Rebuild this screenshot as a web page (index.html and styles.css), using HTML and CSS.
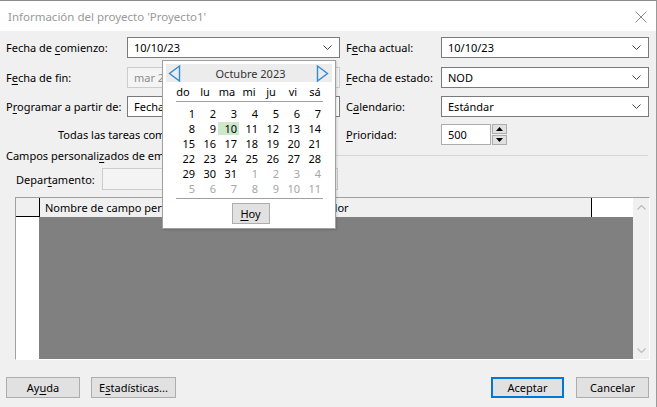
FILE: index.html
```html
<!DOCTYPE html>
<html lang="es">
<head>
    <meta charset="UTF-8">
    <title>Información del proyecto</title>
    <link rel="stylesheet" href="styles.css">
</head>
<body>
<div class="dialog">
    <div class="titlebar">
        <span class="title">Información del proyecto 'Proyecto1'</span>
        <svg class="close" width="12" height="12" viewBox="0 0 12 12">
            <path d="M0.5 0.5 L11.5 11.5 M11.5 0.5 L0.5 11.5" stroke="#8a8a8a" stroke-width="1" fill="none"/>
        </svg>
    </div>
    <div class="content">
        <div class="form">
            <div class="col left">
                <div class="row r1">
                    <label class="lbl">Fecha de <u>c</u>omienzo:</label>
                    <div class="combo">
                        <span>10/10/23</span>
                        <svg class="chev" width="9" height="5" viewBox="0 0 9 5"><path d="M0.5 0.5 L4.5 4.5 L8.5 0.5" stroke="#444" fill="none"/></svg>
                    </div>
                </div>
                <div class="row r2">
                    <label class="lbl">F<u>e</u>cha de fin:</label>
                    <div class="field disabled"><span>mar 27/10/23</span></div>
                </div>
                <div class="row r3">
                    <label class="lbl">P<u>r</u>ogramar a partir de:</label>
                    <div class="combo"><span>Fecha de comienzo del proyecto</span></div>
                </div>
                <div class="row r4">
                    <span class="note">Todas las tareas comienzan lo antes posible.</span>
                </div>
            </div>
            <div class="col right">
                <div class="row r1">
                    <label class="lbl">F<u>e</u>cha actual:</label>
                    <div class="combo">
                        <span>10/10/23</span>
                        <svg class="chev" width="9" height="5" viewBox="0 0 9 5"><path d="M0.5 0.5 L4.5 4.5 L8.5 0.5" stroke="#444" fill="none"/></svg>
                    </div>
                </div>
                <div class="row r2">
                    <label class="lbl"><u>F</u>echa de estado:</label>
                    <div class="combo">
                        <span>NOD</span>
                        <svg class="chev" width="9" height="5" viewBox="0 0 9 5"><path d="M0.5 0.5 L4.5 4.5 L8.5 0.5" stroke="#444" fill="none"/></svg>
                    </div>
                </div>
                <div class="row r3">
                    <label class="lbl">C<u>a</u>lendario:</label>
                    <div class="combo">
                        <span>Estándar</span>
                        <svg class="chev" width="9" height="5" viewBox="0 0 9 5"><path d="M0.5 0.5 L4.5 4.5 L8.5 0.5" stroke="#444" fill="none"/></svg>
                    </div>
                </div>
                <div class="row r4">
                    <label class="lbl"><u>P</u>rioridad:</label>
                    <div class="field spinbox"><span>500</span></div>
                    <div class="spin">
                        <div class="spin-btn">
                            <svg width="7" height="4" viewBox="0 0 7 4"><path d="M0 4 L3.5 0 L7 4 Z" fill="#000"/></svg>
                        </div>
                        <div class="spin-btn">
                            <svg width="7" height="4" viewBox="0 0 7 4"><path d="M0 0 L3.5 4 L7 0 Z" fill="#000"/></svg>
                        </div>
                    </div>
                </div>
            </div>
        </div>

        <div class="group">
            <span>Campos personali<u>z</u>ados de empresa</span>
            <div class="group-line"></div>
        </div>

        <div class="dept">
            <label class="lbl">Depar<u>t</u>amento:</label>
            <div class="field disabled dept-box"></div>
        </div>

        <div class="grid">
            <div class="grid-head">
                <div class="corner"></div>
                <div class="hcell name">Nombre de campo personalizado</div>
                <div class="hcell value">Valor</div>
                <div class="hcell blank"></div>
            </div>
            <div class="grid-body">
                <div class="rowhead"></div>
                <div class="empty"></div>
            </div>
            <div class="scroll">
                <svg width="9" height="5" viewBox="0 0 9 5"><path d="M0.5 4.5 L4.5 0.5 L8.5 4.5" stroke="#bdbdbd" stroke-width="1.3" fill="none"/></svg>
                <svg width="9" height="5" viewBox="0 0 9 5"><path d="M0.5 0.5 L4.5 4.5 L8.5 0.5" stroke="#bdbdbd" stroke-width="1.3" fill="none"/></svg>
            </div>
        </div>

        <div class="buttons">
            <button class="btn help">Ay<u>u</u>da</button>
            <button class="btn stats">E<u>s</u>tadísticas...</button>
            <div class="spacer"></div>
            <button class="btn ok">Aceptar</button>
            <button class="btn">Cancelar</button>
        </div>
    </div>

    <!-- calendario desplegado -->
    <div class="calendar">
        <div class="cal-head">
            <svg class="arrow" width="13" height="17" viewBox="0 0 13 17"><path d="M11.5 1 L1.5 8.5 L11.5 16 Z" stroke="#2f8ad8" stroke-width="1.4" fill="none"/></svg>
            <span class="month">Octubre 2023</span>
            <svg class="arrow" width="13" height="17" viewBox="0 0 13 17"><path d="M1.5 1 L11.5 8.5 L1.5 16 Z" stroke="#2f8ad8" stroke-width="1.4" fill="none"/></svg>
        </div>
        <div class="names">
            <span>do</span><span>lu</span><span>ma</span><span>mi</span><span>ju</span><span>vi</span><span>sá</span>
        </div>
        <div class="cal-line"></div>
        <div class="days" id="days"></div>
        <div class="cal-line bottom"></div>
        <div class="cal-foot">
            <button class="btn today"><u>H</u>oy</button>
        </div>
    </div>
</div>
<script>
    var daysobj = document.getElementById("days");
    var html = "";
    for (var i = 1; i <= 42; i++) {
        var d = i <= 31 ? i : i - 31;
        var cls = i > 31 ? "other" : "";
        if (i == 10) cls = "today-cell";
        html += '<span class="' + cls + '">' + d + '</span>';
    }
    daysobj.innerHTML = html;
</script>
</body>
</html>
```

FILE: styles.css
```css
* {
    margin: 0;
    padding: 0;
    box-sizing: border-box;
}
body {
    font-family: "Segoe UI", "Noto Sans", sans-serif;
    font-size: 11px;
    color: #000;
    background: #f0f0f0;
}
u {
    text-decoration: underline;
    text-underline-offset: 2px;
}
label, span {
    white-space: nowrap;
}
.dialog {
    width: 657px;
    height: 407px;
    position: relative;
    background: #f0f0f0;
    border-top: 1px solid #8c8c8c;
    border-right: 1px solid #9a9a9a;
    overflow: hidden;
}
.titlebar {
    height: 30px;
    background: #fff;
    display: flex;
    align-items: center;
    padding: 0 9px 0 8px;
}
.title {
    color: #999;
    font-size: 11.5px;
    flex: 1;
}
.close {
    margin-top: 1px;
}

.content {
    padding: 6px 7px 0 6px;
}
.form {
    display: flex;
}
.col.left {
    width: 334px;
}
.col.right {
    margin-left: 6px;
    flex: 1;
}
.row {
    display: flex;
    align-items: center;
    height: 21px;
}
.row.r1 { margin-bottom: 9px; }
.row.r2 { margin-bottom: 8px; }
.row.r3 { margin-bottom: 7px; }
.left .lbl {
    width: 121px;
}
.right .lbl {
    width: 95px;
}
.combo, .field {
    height: 21px;
    border: 1px solid #7a7a7a;
    background: #fff;
    display: flex;
    align-items: center;
    padding: 0 6px;
    white-space: nowrap;
    overflow: hidden;
}
.left .combo, .left .field {
    width: 213px;
}
.right .combo {
    flex: 1;
}
.combo span, .field span {
    flex: 1;
}
.chev {
    margin-right: 1px;
}
.field.disabled {
    background: #f4f4f4;
    border-color: #cccccc;
    color: #8c8c8c;
}
.note {
    margin-left: 52px;
}
.field.spinbox {
    width: 50px;
    border-color: #adadad;
    padding-left: 6px;
}
.spin {
    margin-left: 1px;
    width: 15px;
    height: 21px;
    display: flex;
    flex-direction: column;
    gap: 1px;
}
.spin-btn {
    flex: 1;
    background: #e1e1e1;
    border: 1px solid #adadad;
    display: flex;
    align-items: center;
    justify-content: center;
}

.group {
    display: flex;
    align-items: center;
    height: 16px;
    margin-top: 2px;
}
.group-line {
    flex: 1;
    height: 1px;
    background: #d5d5d5;
    margin: 0 1px 0 6px;
}
.dept {
    display: flex;
    align-items: center;
    height: 22px;
    margin-top: 5px;
    padding-left: 10px;
}
.dept .lbl {
    width: 86px;
}
.dept-box {
    width: 236px;
    height: 22px;
}

.grid {
    margin: 7px 0 0 9px;
    width: 635px;
    height: 163px;
    border: 1px solid #a0a0a0;
    border-right-color: #fff;
    border-bottom-color: #fff;
    position: relative;
    display: flex;
    flex-direction: column;
}
.grid-head {
    height: 19px;
    display: flex;
    width: 617px;
}
.corner {
    width: 24px;
    border-right: 1px solid #000;
    border-bottom: 1px solid #000;
    background: #f0f0f0;
}
.hcell {
    display: flex;
    align-items: center;
    padding-left: 5px;
    background: #f0f0f0;
    white-space: nowrap;
    overflow: hidden;
}
.hcell.name {
    width: 277px;
}
.hcell.value {
    width: 275px;
    border-right: 1px solid #000;
}
.hcell.blank {
    flex: 1;
    background: #fff;
}
.grid-body {
    flex: 1;
    display: flex;
    width: 617px;
}
.rowhead {
    width: 23px;
    background: #fff;
}
.empty {
    flex: 1;
    background: #808080;
}
.scroll {
    position: absolute;
    top: 0;
    right: 0;
    width: 16px;
    height: 161px;
    background: #f0f0f0;
    display: flex;
    flex-direction: column;
    align-items: center;
    justify-content: space-between;
    padding: 7px 0 6px;
}

.buttons {
    display: flex;
    margin-top: 17px;
    gap: 10px;
}
.spacer {
    flex: 1;
}
.btn {
    height: 21px;
    background: #e1e1e1;
    border: 1px solid #adadad;
    font-family: inherit;
    font-size: 11px;
    color: #000;
}
.btn.help {
    width: 74px;
}
.btn.stats {
    width: 85px;
    margin-left: 1px;
}
.btn.ok {
    width: 73px;
    border: 2px solid #0078d7;
}
.btn:last-child {
    width: 73px;
    margin-left: 2px;
}

.calendar {
    position: absolute;
    left: 162px;
    top: 59px;
    width: 174px;
    height: 169px;
    background: #fff;
    border: 1px solid #a0a0a0;
    box-shadow: 1px 1px 2px rgba(0, 0, 0, .15);
    padding: 3px 3px 0 3px;
}
.cal-head {
    height: 18px;
    background: #ececec;
    display: flex;
    align-items: center;
    justify-content: space-between;
    padding: 0 3px 0 2px;
    color: #333;
}
.month {
    font-size: 11px;
    margin-left: 4px;
}
.names {
    display: grid;
    grid-template-columns: repeat(7, 22px);
    margin: 3px 0 0 6px;
}
.names span {
    height: 16px;
    line-height: 14px;
    text-align: center;
}
.days {
    display: grid;
    grid-template-columns: repeat(7, 21px);
    margin-left: 10px;
}
.days span {
    height: 15px;
    line-height: 15px;
    text-align: right;
    padding-right: 2px;
}
.days .other {
    color: #a6a6a6;
}
.days .today-cell {
    background: #cde8cd;
    height: 13px;
    line-height: 13px;
    margin-top: 1px;
    margin-bottom: 1px;
}
.cal-line {
    height: 1px;
    background: #a0a0a0;
    margin: 0 9px 4px 10px;
}
.cal-line.bottom {
    margin-top: 2px;
}
.cal-foot {
    display: flex;
    justify-content: center;
    padding-left: 1px;
}
.btn.today {
    width: 38px;
    height: 21px;
}
```
